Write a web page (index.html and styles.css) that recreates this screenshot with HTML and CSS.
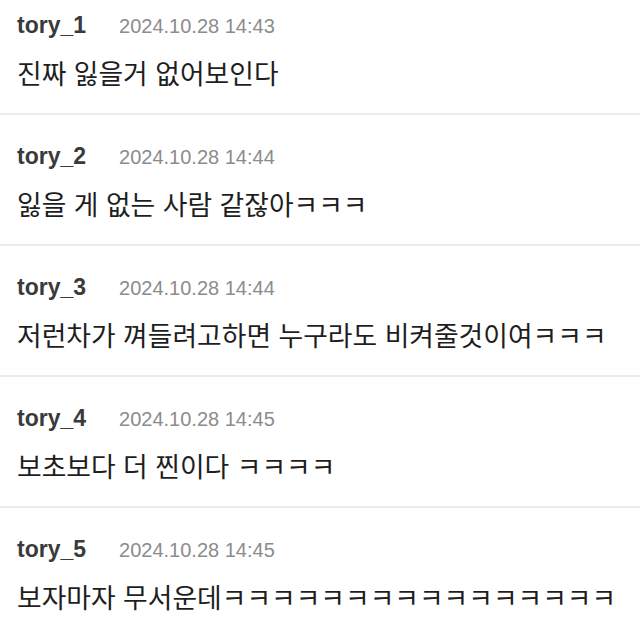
FILE: index.html
```html
<!DOCTYPE html>
<html lang="ko">

<head>
    <meta charset="UTF-8">
    <meta name="viewport" content="width=device-width, initial-scale=1.0">
    <title>댓글</title>
    <link rel="stylesheet" href="styles.css">
</head>

<body>
    <ul class="comment-list">
        <li class="comment">
            <div class="comment-head">
                <span class="nick">tory_1</span>
                <span class="date">2024.10.28 14:43</span>
            </div>
            <p class="comment-text">진짜 잃을거 없어보인다</p>
        </li>
        <li class="comment">
            <div class="comment-head">
                <span class="nick">tory_2</span>
                <span class="date">2024.10.28 14:44</span>
            </div>
            <p class="comment-text">잃을 게 없는 사람 같잖아ㅋㅋㅋ</p>
        </li>
        <li class="comment">
            <div class="comment-head">
                <span class="nick">tory_3</span>
                <span class="date">2024.10.28 14:44</span>
            </div>
            <p class="comment-text">저런차가 껴들려고하면 누구라도 비켜줄것이여ㅋㅋㅋ</p>
        </li>
        <li class="comment">
            <div class="comment-head">
                <span class="nick">tory_4</span>
                <span class="date">2024.10.28 14:45</span>
            </div>
            <p class="comment-text">보초보다 더 찐이다 ㅋㅋㅋㅋ</p>
        </li>
        <li class="comment">
            <div class="comment-head">
                <span class="nick">tory_5</span>
                <span class="date">2024.10.28 14:45</span>
            </div>
            <p class="comment-text">보자마자 무서운데ㅋㅋㅋㅋㅋㅋㅋㅋㅋㅋㅋㅋㅋㅋㅋㅋ</p>
        </li>
    </ul>
</body>

</html>
```

FILE: styles.css
```css
/* General styles */
body {
    font-family: 'Noto Sans CJK KR', 'Noto Sans', sans-serif;
    margin: 0;
    padding: 0;
    background-color: #ffffff;
    color: #222;
    overflow: hidden;
}

.comment-list {
    list-style: none;
    margin: -16px 0 0 0;
    padding: 0;
}

.comment {
    padding: 26px 17px 25px;
    border-bottom: 2px solid #ebebeb;
}

.comment-head {
    display: flex;
    align-items: baseline;
    gap: 33px;
    height: 30px;
    line-height: 30px;
}

.nick {
    font-family: 'Liberation Sans', Arial, sans-serif;
    font-size: 23px;
    font-weight: bold;
    color: #3a3a3a;
}

.date {
    font-family: 'Liberation Sans', Arial, sans-serif;
    font-size: 20px;
    color: #8c8c8c;
}

.comment-text {
    margin: 18px 0 0 0;
    font-size: 26.8px;
    line-height: 30px;
    color: #1e1e1e;
    white-space: nowrap;
}
```
